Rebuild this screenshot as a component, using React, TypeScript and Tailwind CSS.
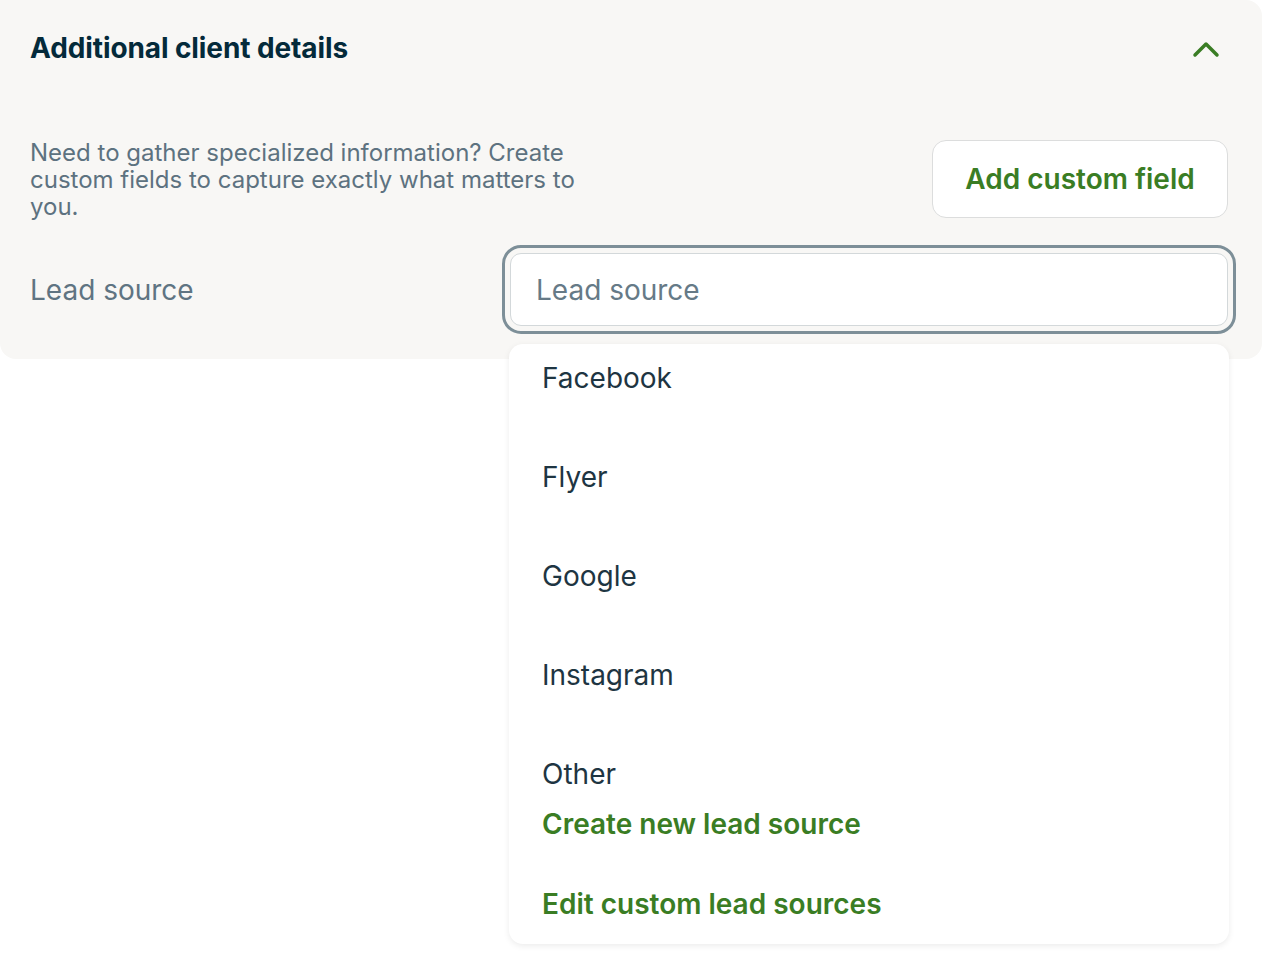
import React from "react";

const sources = ["Facebook", "Flyer", "Google", "Instagram"];

export default function App() {
  return (
    <div className="min-h-screen bg-white font-['Inter',sans-serif]">
      {/* Card */}
      <div className="relative bg-[#f8f7f5] rounded-tr-[16px] rounded-b-[16px] w-[1262px] pl-[30px] pr-[34px] pb-[33px]">
        <div className="flex items-center justify-between h-[95px]">
          <h2 className="text-[28px] font-bold text-[#042a3a] tracking-[-0.1px]">
            Additional client details
          </h2>
          <svg width="28" height="20" viewBox="0 0 28 20" className="mr-[8px] mt-[2px]">
            <polyline
              points="3,16 14,5 25,16"
              fill="none"
              stroke="#3a7d24"
              strokeWidth="3.5"
              strokeLinecap="round"
              strokeLinejoin="round"
            />
          </svg>
        </div>

        <div className="flex items-start justify-between mt-[45px]">
          <p className="max-w-[565px] text-[24px] leading-[27px] text-[#5d7280] -mt-[1px]">
            Need to gather specialized information? Create custom fields to capture exactly what matters to you.
          </p>
          <button className="h-[78px] w-[296px] bg-white border-[1.5px] border-[#dcdddd] rounded-[14px] text-[28px] font-semibold text-[#3a7d24]">
            Add custom field
          </button>
        </div>

        <div className="flex items-center mt-[33px]">
          <label className="w-[480px] text-[28px] text-[#5f7482]">Lead source</label>
          <div className="relative flex-1">
            <div className="h-[73px] bg-white border-[1.5px] border-[#d3d8da] rounded-[11px] flex items-center pl-[25px] text-[28px] text-[#667a87] outline-[3px] outline-solid outline-[#7d8f98] outline-offset-[5px]">
              Lead source
            </div>

            {/* Dropdown */}
            <div className="absolute left-[-1px] right-[-1px] top-[91px] h-[600px] bg-white rounded-[14px] shadow-[0_2px_6px_rgba(0,0,0,0.08)] pl-[33px] z-10">
              {sources.map((s) => (
                <div key={s} className="h-[99px] pt-[16px] text-[28px] leading-[36px] text-[#1e3542]">
                  {s}
                </div>
              ))}
              <div className="h-[66px] pt-[16px] text-[28px] leading-[36px] text-[#1e3542]">Other</div>
              <div className="h-[80px] text-[28px] leading-[36px] font-semibold text-[#3a7d24]">
                Create new lead source
              </div>
              <div className="text-[28px] leading-[36px] font-semibold text-[#3a7d24]">
                Edit custom lead sources
              </div>
            </div>
          </div>
        </div>
      </div>
    </div>
  );
}
